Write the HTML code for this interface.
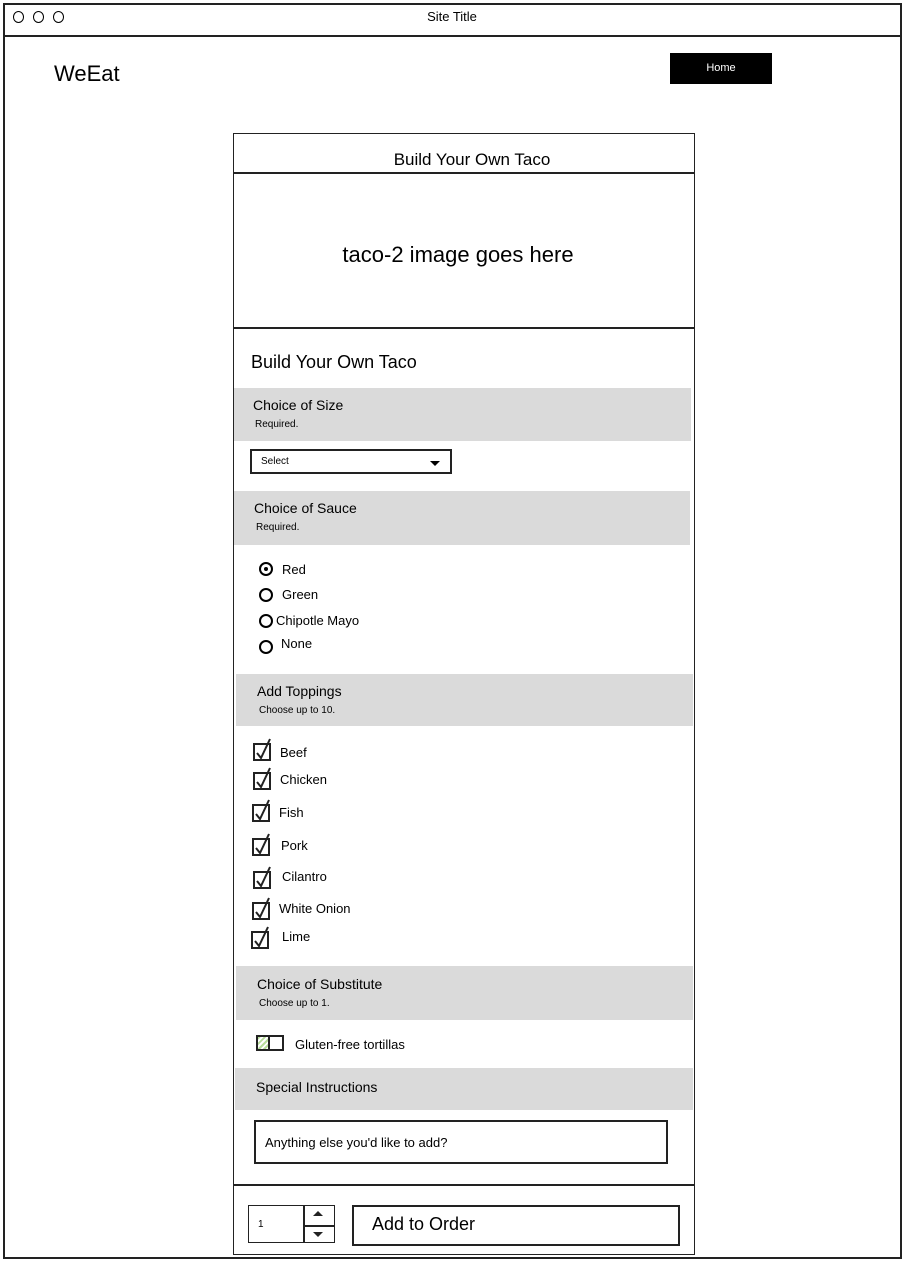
<!DOCTYPE html>
<html><head><meta charset="utf-8"><style>
*{margin:0;padding:0;box-sizing:border-box}
body{width:904px;height:1261px;background:#fff;position:relative;overflow:hidden;font-family:"Liberation Sans",sans-serif;color:#000}
.a{position:absolute}
.bar{position:absolute;background:#dadada}
.h{position:absolute;font-size:14px}
.s{position:absolute;font-size:10px}
.t{position:absolute;font-size:13px;line-height:16px}
.rb{position:absolute;width:14px;height:14px;border:2px solid #000;border-radius:50%}
.ck{position:absolute;width:22px;height:24px}
</style></head><body>
<div class="a" style="left:3px;top:3px;width:899px;height:1256px;border:2px solid #222"></div>
<div class="a" style="left:3px;top:35px;width:899px;height:2px;background:#222"></div>
<div class="rb" style="left:13px;top:11px;width:11px;height:12px;border-width:1.5px"></div>
<div class="rb" style="left:33px;top:11px;width:11px;height:12px;border-width:1.5px"></div>
<div class="rb" style="left:53px;top:11px;width:11px;height:12px;border-width:1.5px"></div>
<div class="a" style="left:0;width:904px;top:9px;text-align:center;font-size:13px">Site Title</div>
<div class="a" style="left:54px;top:61px;font-size:22px">WeEat</div>
<div class="a" style="left:670px;top:53px;width:102px;height:31px;background:#000;color:#fff;font-size:11px;text-align:center;line-height:31px">Home</div>

<div class="a" style="left:233px;top:133px;width:462px;height:1122px;border:1.5px solid #222"></div>
<div class="a" style="left:233px;top:172px;width:462px;height:2px;background:#222"></div>
<div class="a" style="left:233px;top:327px;width:462px;height:2px;background:#222"></div>
<div class="a" style="left:233px;top:150px;width:478px;text-align:center;font-size:17px">Build Your Own Taco</div>
<div class="a" style="left:233px;top:242px;width:450px;text-align:center;font-size:22px">taco-2 image goes here</div>
<div class="a" style="left:251px;top:352px;font-size:18px">Build Your Own Taco</div>

<div class="bar" style="left:234px;top:388px;width:457px;height:53px"></div>
<div class="h" style="left:253px;top:397px">Choice of Size</div>
<div class="s" style="left:255px;top:419px">Required.</div>
<div class="a" style="left:250px;top:449px;width:202px;height:25px;border:2px solid #222"></div>
<div class="s" style="left:261px;top:456px">Select</div>
<div class="a" style="left:430px;top:461px;border-left:5px solid transparent;border-right:5px solid transparent;border-top:5px solid #000"></div>

<div class="bar" style="left:234px;top:491px;width:456px;height:54px"></div>
<div class="h" style="left:254px;top:500px">Choice of Sauce</div>
<div class="s" style="left:256px;top:522px">Required.</div>
<div class="rb" style="left:259px;top:562px"></div><div class="a" style="left:264px;top:567px;width:4px;height:4px;border-radius:50%;background:#000"></div>
<div class="t" style="left:282px;top:562px">Red</div>
<div class="rb" style="left:259px;top:588px"></div><div class="t" style="left:282px;top:587px">Green</div>
<div class="rb" style="left:259px;top:614px"></div><div class="t" style="left:276px;top:613px">Chipotle Mayo</div>
<div class="rb" style="left:259px;top:640px"></div><div class="t" style="left:281px;top:636px">None</div>

<div class="bar" style="left:236px;top:674px;width:457px;height:52px"></div>
<div class="h" style="left:257px;top:683px">Add Toppings</div>
<div class="s" style="left:259px;top:705px">Choose up to 10.</div>

<svg class="ck" style="left:252px;top:738px" viewBox="0 0 22 24"><rect x="2" y="6" width="16" height="16" fill="none" stroke="#222" stroke-width="2"/><path d="M5 15 L9 20 L18 1" fill="none" stroke="#222" stroke-width="2"/></svg><div class="t" style="left:280px;top:745px">Beef</div>
<svg class="ck" style="left:252px;top:767px" viewBox="0 0 22 24"><rect x="2" y="6" width="16" height="16" fill="none" stroke="#222" stroke-width="2"/><path d="M5 15 L9 20 L18 1" fill="none" stroke="#222" stroke-width="2"/></svg><div class="t" style="left:280px;top:772px">Chicken</div>
<svg class="ck" style="left:251px;top:799px" viewBox="0 0 22 24"><rect x="2" y="6" width="16" height="16" fill="none" stroke="#222" stroke-width="2"/><path d="M5 15 L9 20 L18 1" fill="none" stroke="#222" stroke-width="2"/></svg><div class="t" style="left:279px;top:805px">Fish</div>
<svg class="ck" style="left:251px;top:833px" viewBox="0 0 22 24"><rect x="2" y="6" width="16" height="16" fill="none" stroke="#222" stroke-width="2"/><path d="M5 15 L9 20 L18 1" fill="none" stroke="#222" stroke-width="2"/></svg><div class="t" style="left:281px;top:838px">Pork</div>
<svg class="ck" style="left:252px;top:866px" viewBox="0 0 22 24"><rect x="2" y="6" width="16" height="16" fill="none" stroke="#222" stroke-width="2"/><path d="M5 15 L9 20 L18 1" fill="none" stroke="#222" stroke-width="2"/></svg><div class="t" style="left:282px;top:869px">Cilantro</div>
<svg class="ck" style="left:251px;top:897px" viewBox="0 0 22 24"><rect x="2" y="6" width="16" height="16" fill="none" stroke="#222" stroke-width="2"/><path d="M5 15 L9 20 L18 1" fill="none" stroke="#222" stroke-width="2"/></svg><div class="t" style="left:279px;top:901px">White Onion</div>
<svg class="ck" style="left:250px;top:926px" viewBox="0 0 22 24"><rect x="2" y="6" width="16" height="16" fill="none" stroke="#222" stroke-width="2"/><path d="M5 15 L9 20 L18 1" fill="none" stroke="#222" stroke-width="2"/></svg><div class="t" style="left:282px;top:929px">Lime</div>

<div class="bar" style="left:236px;top:966px;width:457px;height:54px"></div>
<div class="h" style="left:257px;top:976px">Choice of Substitute</div>
<div class="s" style="left:259px;top:998px">Choose up to 1.</div>
<div class="a" style="left:256px;top:1035px;width:14px;height:16px;border:2px solid #222;background:repeating-linear-gradient(135deg,#b7dd9a 0 2px,#fff 2px 4px)"></div>
<div class="a" style="left:268px;top:1035px;width:16px;height:16px;border:2px solid #222"></div>
<div class="t" style="left:295px;top:1037px">Gluten-free tortillas</div>

<div class="bar" style="left:235px;top:1068px;width:458px;height:42px"></div>
<div class="h" style="left:256px;top:1079px">Special Instructions</div>
<div class="a" style="left:254px;top:1120px;width:414px;height:44px;border:2px solid #222"></div>
<div class="a" style="left:265px;top:1135px;font-size:13px">Anything else you'd like to add?</div>

<div class="a" style="left:233px;top:1184px;width:462px;height:2px;background:#222"></div>
<div class="a" style="left:248px;top:1205px;width:87px;height:38px;border:1.5px solid #222"></div>
<div class="a" style="left:303px;top:1205px;width:1.5px;height:38px;background:#222"></div>
<div class="a" style="left:304px;top:1225px;width:31px;height:1.5px;background:#222"></div>
<div class="a" style="left:313px;top:1211px;border-left:5px solid transparent;border-right:5px solid transparent;border-bottom:5px solid #222"></div>
<div class="a" style="left:313px;top:1232px;border-left:5px solid transparent;border-right:5px solid transparent;border-top:5px solid #222"></div>
<div class="s" style="left:258px;top:1219px">1</div>
<div class="a" style="left:352px;top:1205px;width:328px;height:41px;border:2px solid #222"></div>
<div class="a" style="left:372px;top:1214px;font-size:18px">Add to Order</div>
</body></html>
